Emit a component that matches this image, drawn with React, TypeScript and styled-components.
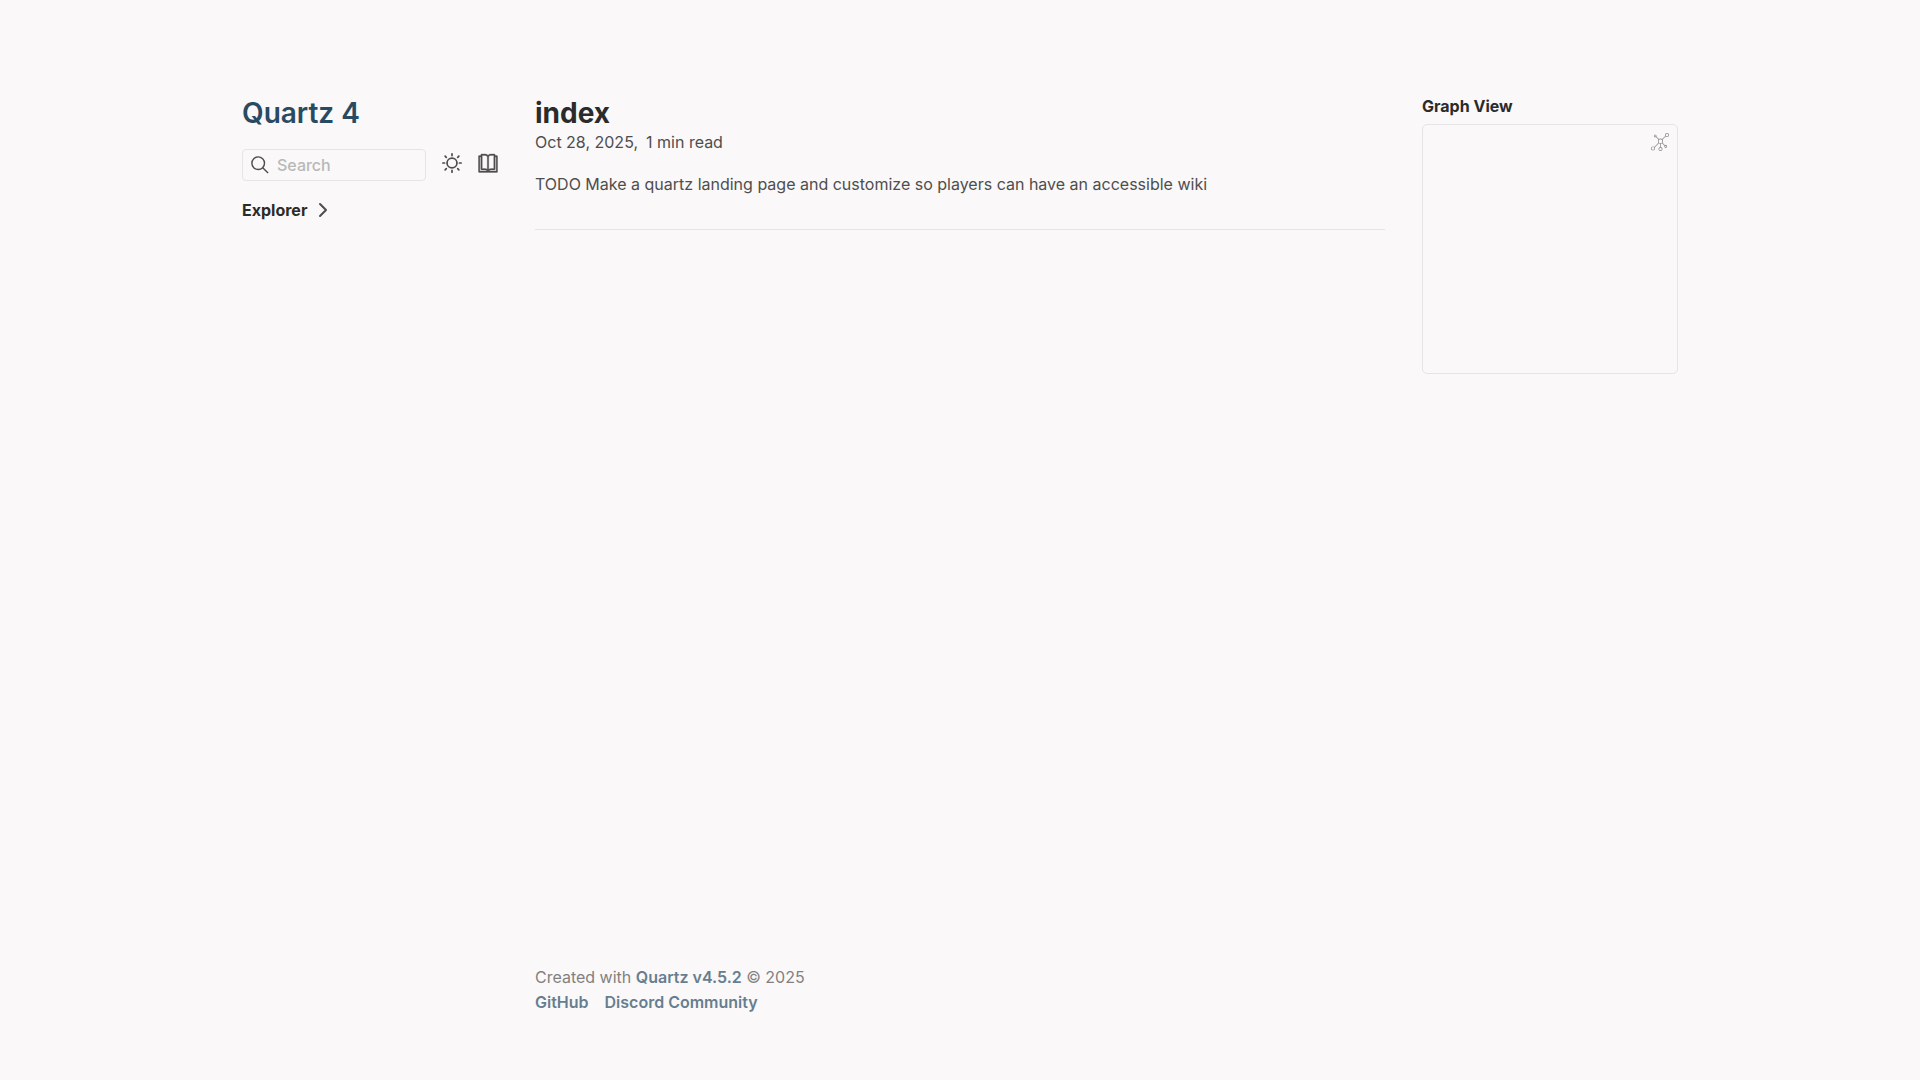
import React, { useState } from "react";
import styled, { createGlobalStyle } from "styled-components";

const color = {
  light: "#faf8f8",
  lightgray: "#e5e5e5",
  gray: "#b8b8b8",
  darkgray: "#4e4e4e",
  dark: "#2b2b2b",
  secondary: "#284b63",
};

const GlobalStyle = createGlobalStyle`
  *, *::before, *::after { box-sizing: border-box; }
  body {
    margin: 0;
    background: ${color.light};
    color: ${color.darkgray};
    font-family: Inter, "Liberation Sans", sans-serif;
    font-size: 16px;
    line-height: 25px;
    text-rendering: optimizeLegibility;
  }
  h1, h2, h3, p, ul { margin: 0; padding: 0; }
`;

const Page = styled.div`
  display: grid;
  grid-template-columns: 320px minmax(0, 1fr) 320px;
  gap: 5px;
  max-width: 1500px;
  min-height: 100vh;
  margin: 0 auto;
`;

const Sidebar = styled.aside<{ $gap: number }>`
  display: flex;
  flex-direction: column;
  gap: ${(p) => p.$gap}px;
  padding: 96px 32px 0;
`;

const Center = styled.div`
  display: flex;
  flex-direction: column;
  justify-content: space-between;
  padding: 96px 0 65px;
`;

const SiteTitle = styled.h2`
  font-size: 28px;
  line-height: 34px;
  font-weight: 600;
`;

const SiteLink = styled.a`
  color: ${color.secondary};
  text-decoration: none;
`;

const Toolbar = styled.div`
  display: flex;
  align-items: flex-start;
  gap: 16px;
`;

const SearchButton = styled.button`
  display: flex;
  align-items: center;
  flex: 1;
  gap: 8px;
  height: 32px;
  padding: 0 8px;
  border: 1px solid ${color.lightgray};
  border-radius: 4px;
  background: none;
  color: ${color.gray};
  font: inherit;
  font-weight: 500;
  line-height: 24px;
  cursor: pointer;
`;

const IconButton = styled.button`
  display: flex;
  margin: 4px 0 0;
  padding: 0;
  border: 0;
  background: none;
  color: ${color.darkgray};
  cursor: pointer;
`;

const ExplorerToggle = styled.button`
  display: flex;
  align-items: center;
  align-self: flex-start;
  gap: 8px;
  padding: 0;
  border: 0;
  background: none;
  color: ${color.dark};
  font: inherit;
  cursor: pointer;

  svg { color: ${color.darkgray}; }
`;

const SectionTitle = styled.h3`
  font-size: 16px;
  line-height: 20px;
  font-weight: 700;
  color: ${color.dark};
`;

const ArticleTitle = styled.h1`
  font-size: 28px;
  line-height: 34px;
  font-weight: 700;
  color: ${color.dark};
`;

const Meta = styled.p`
  display: flex;
  gap: 8px;
`;

const Body = styled.p`
  margin-top: 17px;
`;

const Divider = styled.hr`
  height: 1px;
  margin: 32px 0 0;
  border: 0;
  background: ${color.lightgray};
`;

const GraphBox = styled.div`
  position: relative;
  height: 250px;
  border: 1px solid ${color.lightgray};
  border-radius: 5px;
`;

const GraphButton = styled.button`
  position: absolute;
  top: 4px;
  right: 4px;
  display: flex;
  padding: 4px;
  border: 0;
  background: none;
  color: ${color.darkgray};
  opacity: 0.7;
  cursor: pointer;
`;

const Footer = styled.footer`
  opacity: 0.7;
`;

const FooterLink = styled.a`
  color: ${color.secondary};
  font-weight: 600;
  text-decoration: none;
`;

const LinkList = styled.ul`
  display: flex;
  gap: 16px;
  list-style: none;
`;

const SearchIcon = () => (
  <svg width="18" height="18" viewBox="0 0 20 20" fill="none" stroke={color.darkgray} strokeWidth="1.6" aria-hidden="true">
    <circle cx="8" cy="8" r="7" />
    <path d="M13 13 L19 19" />
  </svg>
);

const SunIcon = () => (
  <svg width="20" height="20" viewBox="0 0 35 35" fill="none" stroke="currentColor" strokeWidth="3" strokeLinecap="round" aria-hidden="true">
    <circle cx="17.5" cy="17.5" r="8.7" />
    <path d="M1.5 17.5h3M30.5 17.5h3M17.5 1.5v3M17.5 30.5v3M5.5 5.5l2 2M27.5 27.5l2 2M29.5 5.5l-2 2M7.5 27.5l-2 2" />
  </svg>
);

const BookIcon = () => (
  <svg width="20" height="20" viewBox="0 0 24 24" fill="currentColor" stroke="currentColor" strokeWidth="0.3" aria-hidden="true">
    <g transform="translate(-1.8, -1.8) scale(1.15, 1.2)">
      <path d="M8.989 2.5C10.138 2.5 11.221 2.967 12.005 3.767C12.788 2.967 13.871 2.5 15.02 2.5L18.755 2.5C19.169 2.5 19.505 2.836 19.505 3.25L19.505 4.004L21.255 4.005C21.634 4.005 21.948 4.287 21.998 4.653L22.005 4.755L22.005 20.25C22.005 20.63 21.723 20.943 21.356 20.993L21.255 21L2.755 21C2.375 21 2.061 20.718 2.012 20.352L2.005 20.25L2.005 4.755C2.005 4.375 2.287 4.061 2.653 4.011L2.755 4.005L4.504 4.004L4.504 3.25C4.504 2.87 4.787 2.557 5.153 2.507L5.254 2.5ZM4.504 5.504L3.505 5.504L3.505 19.5L10.948 19.5C10.451 18.921 9.739 18.559 8.967 18.507L8.773 18.5L5.254 18.5C4.875 18.5 4.561 18.218 4.511 17.852L4.504 17.75ZM19.505 17.75C19.505 18.164 19.169 18.5 18.755 18.5L15.236 18.5C14.391 18.5 13.599 18.872 13.061 19.5L20.505 19.5L20.505 5.504L19.505 5.504ZM18.006 3.999L15.02 4L14.826 4.007C13.989 4.067 13.225 4.51 12.755 5.212L12.755 17.777L12.778 17.76C13.492 17.272 14.345 17 15.236 17L18.006 16.999ZM8.989 4L6.004 3.999L6.004 16.999L8.773 17C9.576 17 10.346 17.22 11.013 17.62L11.254 17.776L11.254 5.211C10.82 4.564 10.136 4.136 9.375 4.027L9.183 4.007Z" />
    </g>
  </svg>
);

const ChevronIcon = ({ open }: { open: boolean }) => (
  <svg width="16" height="16" viewBox="0 0 16 16" fill="none" stroke="currentColor" strokeWidth="2" strokeLinecap="round" strokeLinejoin="round" aria-hidden="true">
    <path d={open ? "M2 5l6 6 6-6" : "M5 2l6 6-6 6"} />
  </svg>
);

const GraphIcon = () => (
  <svg width="18" height="18" viewBox="0 0 55 55" fill="currentColor" aria-hidden="true">
    <path d="M49,0c-3.309,0-6,2.691-6,6c0,1.035,0.263,2.009,0.726,2.86l-9.829,9.829C32.542,17.634,30.846,17,29,17 s-3.542,0.634-4.898,1.688l-7.669-7.669C16.785,10.424,17,9.74,17,9c0-2.206-1.794-4-4-4S9,6.794,9,9s1.794,4,4,4 c0.74,0,1.424-0.215,2.019-0.567l7.669,7.669C21.634,21.458,21,23.154,21,25s0.634,3.542,1.688,4.897L10.024,42.562 C8.958,41.595,7.549,41,6,41c-3.309,0-6,2.691-6,6s2.691,6,6,6s6-2.691,6-6c0-1.035-0.263-2.009-0.726-2.86l12.829-12.829 c1.106,0.86,2.44,1.436,3.898,1.619v10.16c-2.833,0.478-5,2.942-5,5.91c0,3.309,2.691,6,6,6s6-2.691,6-6c0-2.967-2.167-5.431-5-5.91 v-10.16c1.458-0.183,2.792-0.759,3.898-1.619l7.669,7.669C41.215,39.576,41,40.26,41,41c0,2.206,1.794,4,4,4s4-1.794,4-4 s-1.794-4-4-4c-0.74,0-1.424,0.215-2.019,0.567l-7.669-7.669C36.366,28.542,37,26.846,37,25s-0.634-3.542-1.688-4.897l9.665-9.665 C46.042,11.405,47.451,12,49,12c3.309,0,6-2.691,6-6S52.309,0,49,0z M11,9c0-1.103,0.897-2,2-2s2,0.897,2,2s-0.897,2-2,2 S11,10.103,11,9z M6,51c-2.206,0-4-1.794-4-4s1.794-4,4-4s4,1.794,4,4S8.206,51,6,51z M33,49c0,2.206-1.794,4-4,4s-4-1.794-4-4 s1.794-4,4-4S33,46.794,33,49z M29,31c-3.309,0-6-2.691-6-6s2.691-6,6-6s6,2.691,6,6S32.309,31,29,31z M47,41c0,1.103-0.897,2-2,2 s-2-0.897-2-2s0.897-2,2-2S47,39.897,47,41z M49,10c-2.206,0-4-1.794-4-4s1.794-4,4-4s4,1.794,4,4S51.206,10,49,10z" />
  </svg>
);

export default function App() {
  const [open, setOpen] = useState(false);

  return (
    <>
      <GlobalStyle />
      <Page>
        <Sidebar $gap={19}>
          <SiteTitle>
            <SiteLink href="#">Quartz 4</SiteLink>
          </SiteTitle>
          <Toolbar>
            <SearchButton type="button">
              <SearchIcon />
              Search
            </SearchButton>
            <IconButton type="button" aria-label="Dark mode">
              <SunIcon />
            </IconButton>
            <IconButton type="button" aria-label="Reader mode">
              <BookIcon />
            </IconButton>
          </Toolbar>
          <ExplorerToggle type="button" aria-expanded={open} onClick={() => setOpen(!open)}>
            <SectionTitle as="span">Explorer</SectionTitle>
            <ChevronIcon open={open} />
          </ExplorerToggle>
        </Sidebar>

        <Center>
          <main>
            <ArticleTitle>index</ArticleTitle>
            <Meta>
              <time dateTime="2025-10-28">Oct 28, 2025,</time>
              <span>1 min read</span>
            </Meta>
            <Body>TODO Make a quartz landing page and customize so players can have an accessible wiki</Body>
            <Divider />
          </main>
          <Footer>
            <p>
              Created with <FooterLink href="#">Quartz v4.5.2</FooterLink> © 2025
            </p>
            <LinkList>
              <li>
                <FooterLink href="#">GitHub</FooterLink>
              </li>
              <li>
                <FooterLink href="#">Discord Community</FooterLink>
              </li>
            </LinkList>
          </Footer>
        </Center>

        <Sidebar $gap={8}>
          <SectionTitle>Graph View</SectionTitle>
          <GraphBox>
            <GraphButton type="button" aria-label="Global Graph">
              <GraphIcon />
            </GraphButton>
          </GraphBox>
        </Sidebar>
      </Page>
    </>
  );
}
